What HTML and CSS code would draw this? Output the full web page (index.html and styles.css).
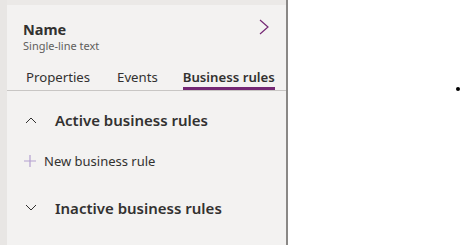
FILE: index.html
```html
<!DOCTYPE html>
<html>
<head>
    <meta charset="utf-8">
    <title>Field properties</title>
    <link rel="stylesheet" href="styles.css">
</head>
<body>
    <div class="rail"></div>
    <div class="panel">
        <div class="topStrip"></div>
        <div class="header">
            <div>
                <div class="fieldName">Name</div>
                <div class="fieldType">Single-line text</div>
            </div>
            <svg class="chevRight" width="12" height="16" viewBox="0 0 12 16">
                <path d="M2 1 L10 8 L2 15" fill="none" stroke="#742774" stroke-width="1.2"/>
            </svg>
        </div>
        <div class="tabs">
            <div class="tab">Properties</div>
            <div class="tab">Events</div>
            <div class="tab active">Business rules</div>
        </div>
        <div class="section">
            <svg class="chev" width="12" height="8" viewBox="0 0 12 8">
                <path d="M1 7 L6 2 L11 7" fill="none" stroke="#323130" stroke-width="1"/>
            </svg>
            <span>Active business rules</span>
        </div>
        <div class="newRule">
            <svg width="12" height="12" viewBox="0 0 12 12">
                <path d="M6 0 V12 M0 6 H12" fill="none" stroke="#b4a0d0" stroke-width="1.2"/>
            </svg>
            <span>New business rule</span>
        </div>
        <div class="section lower">
            <svg class="chev" width="12" height="8" viewBox="0 0 12 8">
                <path d="M1 1 L6 6 L11 1" fill="none" stroke="#323130" stroke-width="1"/>
            </svg>
            <span>Inactive business rules</span>
        </div>
    </div>
    <div class="canvas">
        <div class="dot"></div>
    </div>
</body>
</html>
```

FILE: styles.css
```css
body {
    margin: 0;
    height: 245px;
    display: flex;
    font-family: "Noto Sans", "Open Sans", sans-serif;
    color: #323130;
    background: #fff;
    overflow: hidden;
}
.rail {
    width: 7px;
    background: #e8e6e4;
}
.panel {
    width: 279px;
    background: #f3f2f1;
    border-right: 2px solid #8a8886;
    display: flex;
    flex-direction: column;
}
.topStrip {
    height: 5px;
    background: #ebe9e7;
}
.header {
    display: flex;
    justify-content: space-between;
    align-items: flex-start;
    padding: 14px 16px 0 16px;
}
.fieldName {
    font-size: 14.5px;
    font-weight: 700;
    line-height: 20px;
}
.fieldType {
    font-size: 11px;
    line-height: 14px;
    color: #605e5c;
}
.chevRight {
    margin-top: 0;
}
.tabs {
    display: flex;
    margin-top: 11px;
    border-bottom: 1px solid #c8c6c4;
}
.tab {
    font-size: 13.2px;
    line-height: 20px;
    padding: 3px 0 3px;
    margin-left: 27px;
}
.tab:first-child {
    margin-left: 19px;
}
.tab.active {
    font-weight: 600;
    margin-left: 25px;
    border-bottom: 3px solid #742774;
    padding-bottom: 0;
}
.section {
    display: flex;
    align-items: center;
    height: 40px;
    margin-top: 9px;
    padding-left: 18px;
    font-size: 15px;
    font-weight: 600;
}
.section.lower {
    margin-top: 15px;
}
.section .chev {
    margin-right: 18px;
}
.newRule {
    display: flex;
    align-items: center;
    height: 24px;
    margin-top: 9px;
    padding-left: 17px;
    font-size: 13px;
}
.newRule svg {
    margin-right: 8px;
}
.canvas {
    flex: 1;
    position: relative;
}
.dot {
    position: absolute;
    left: 168px;
    top: 87px;
    width: 4px;
    height: 4px;
    border-radius: 50%;
    background: #000;
}
```
